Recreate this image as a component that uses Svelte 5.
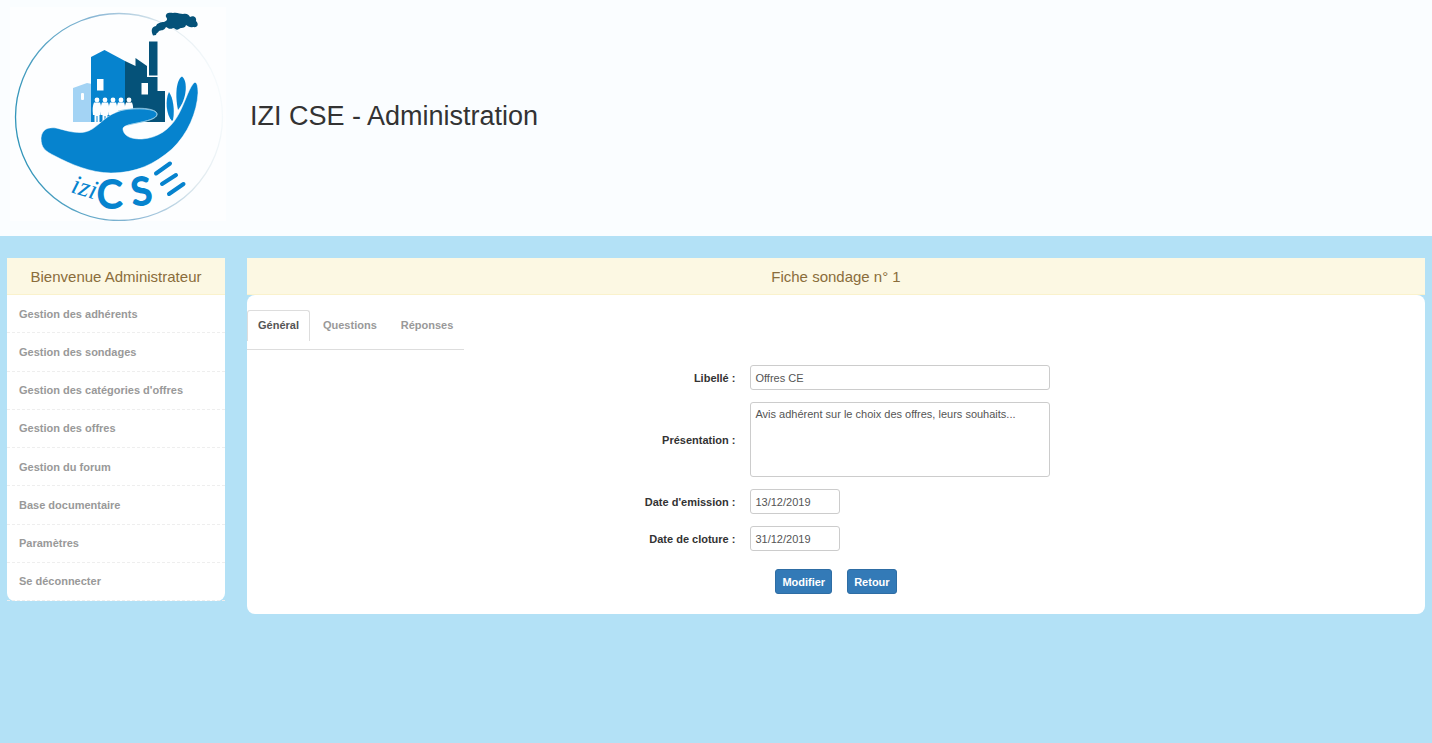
<script lang="ts">
  const menu = [
    "Gestion des adhérents",
    "Gestion des sondages",
    "Gestion des catégories d'offres",
    "Gestion des offres",
    "Gestion du forum",
    "Base documentaire",
    "Paramètres",
    "Se déconnecter",
  ];
  const tabs = ["Général", "Questions", "Réponses"];
  const people = [97, 105, 113, 121, 129];

  let activeTab = $state("Général");
  let label = $state("Offres CE");
  let intro = $state("Avis adhérent sur le choix des offres, leurs souhaits...");
  let startDate = $state("13/12/2019");
  let endDate = $state("31/12/2019");
</script>

<header>
  <svg class="logo" viewBox="10 7 216 214" role="img" aria-label="izi CSE">
    <defs>
      <linearGradient id="ring" x1="0" y1="0.6" x2="1" y2="0.4">
        <stop offset="0" stop-color="#2f94b8" />
        <stop offset="0.5" stop-color="#8fb9d6" />
        <stop offset="0.8" stop-color="#dfe9ee" />
        <stop offset="1" stop-color="#f7fbfd" />
      </linearGradient>
    </defs>
    <rect x="10" y="7" width="216" height="214" fill="#fdfeff" />
    <circle cx="119" cy="117" r="103.5" fill="none" stroke="url(#ring)" stroke-width="1.3" />

    <path fill="#055279" d="M153 35.500C151 31 151 27 156 26C157 23 161 22 164 22C167 21 168 19 166 17C165 13 169 12 173 13C177 12 180 14 183 14C187 13 189 15 190 17C194 15 197 18 196 21C199 24 198 28 193 27C190 28 188 26 186 25C185 29 181 27 179 29C176 31 175 28 173 28C170 30 168 28 166 27C164 31 161 30 159 31C158 33 156 33 156 35Z" />
    <path fill="#a3d3f4" d="M73 88L87 83L92 84V122H73Z" />
    <path fill="#0683ce" d="M91 57L104.500 50L125 61V122H91Z" />
    <path fill="#055279" d="M125 61L135.500 66V58L147 66V77H157.500V91H165V122H125Z" />
    <path fill="#055279" d="M149 41.500H157.500V75.500H149Z" />
    <rect x="97" y="79" width="6.500" height="11.500" fill="#fdfeff" />
    <rect x="141.500" y="83" width="6.500" height="11.500" fill="#fdfeff" />
    <rect x="81" y="93" width="3" height="7" rx="1" fill="#fdfeff" />

    <g fill="#fdfeff">
      {#each people as x}
        <circle cx={x} cy="100" r="2.400" />
        <path d="M{x - 3} 102.500H{x + 3}Q{x + 5} 107 {x + 3.5} 115H{x + 2.5}V122H{x + 0.5}V116H{x - 0.5}V122H{x - 2.5}V115H{x - 4}Q{x - 5} 107 {x - 3} 102.500Z" />
      {/each}
    </g>

    <path fill="#0683ce" stroke="#fdfeff" stroke-width="0.500" d="M41 138C42 129 48 127 56 128C65 130 75 134 85 132C96 130 103 117 117 112C129 107 151 107 156 112C160 117 151 120 142 122C130 125 122 125 123 130C125 138 134 139 142 139C158 138 170 129 177 117C184 106 188 90 193 84C196 80 198 84 198 93C197 112 188 134 172 149C155 164 136 173 111 173C91 173 70 164 55 156C45 151 41 148 41 138Z" />
    <path fill="none" stroke="#8dcbea" stroke-width="0.800" d="M118 111C130 108 151 108 156 112C160 117 151 120 142 122C137 123 132 124 128 125" />
    <path fill="#0683ce" d="M172 121C166 115 165 99 169 92C173 98 175 109 173 120Z" />
    <path fill="#0683ce" d="M178 110C175 96 176 80 182 76.500C188 81 187 99 178 110Z" />

    <g class="wordmark" fill="#0683ce">
      <text class="izi" x="70" y="192" transform="rotate(17 70 192)">izi</text>
      <text class="cse" x="97" y="208">C</text>
      <text class="cse" x="133" y="206" transform="rotate(-8 133 206)">S</text>
    </g>
    <path fill="none" stroke="#0683ce" stroke-width="4" stroke-linecap="round" d="M156 173.500L170 163.500M162 184L176 175M169 194L183.500 184" />
  </svg>
  <h1>IZI CSE - Administration</h1>
</header>

<div class="layout">
  <aside>
    <h2>Bienvenue Administrateur</h2>
    <nav class="menu">
      {#each menu as item}
        <a href="#menu">{item}</a>
      {/each}
    </nav>
  </aside>

  <main>
    <h2>Fiche sondage n° 1</h2>
    <section class="panel">
      <nav class="tabs">
        {#each tabs as tab}
          <a href="#tab" class:active={tab === activeTab} onclick={() => (activeTab = tab)}>{tab}</a>
        {/each}
      </nav>

      <form>
        <div class="fields">
          <label for="label">Libellé :</label>
          <input id="label" type="text" bind:value={label} />
          <label for="intro">Présentation :</label>
          <textarea id="intro" bind:value={intro}></textarea>
          <label for="start">Date d'emission :</label>
          <input id="start" class="date" type="text" bind:value={startDate} />
          <label for="end">Date de cloture :</label>
          <input id="end" class="date" type="text" bind:value={endDate} />
        </div>
        <div class="actions">
          <button type="button">Modifier</button>
          <button type="button">Retour</button>
        </div>
      </form>
    </section>
  </main>
</div>

<style>
  :global(body) {
    background: #b3e1f6;
    color: #333;
    font-family: "Liberation Sans", Arial, sans-serif;
    font-size: 11px;
  }

  header {
    display: flex;
    align-items: center;
    gap: 24px;
    padding: 7px 10px 15px;
    background: #fafdff;
  }

  .logo {
    display: block;
    flex: none;
    width: 216px;
    height: 214px;
  }

  .izi {
    font-family: "Liberation Serif", serif;
    font-style: italic;
    font-size: 27px;
  }

  .cse {
    font-family: Lato, sans-serif;
    font-size: 38px;
    stroke: #0683ce;
    stroke-width: 2px;
    stroke-linejoin: round;
  }

  h1 {
    margin: 0;
    padding-top: 4px;
    font-size: 27px;
    font-weight: normal;
  }

  .layout {
    display: grid;
    grid-template-columns: 218px 1fr;
    gap: 22px;
    align-items: start;
    padding: 22px 7px;
  }

  h2 {
    margin: 0;
    padding: 9px 8px 7px;
    border-bottom: 1px solid #faf2cc;
    background: #fcf8e3;
    color: #8a6d3b;
    font-size: 15px;
    font-weight: normal;
    line-height: 20px;
    text-align: center;
  }

  a {
    color: #999;
    font-weight: bold;
    text-decoration: none;
  }

  .menu {
    display: grid;
    grid-auto-rows: 1fr;
    min-height: 306px;
    border-radius: 0 0 8px 8px;
    background: #fff;
  }

  .menu a {
    display: flex;
    align-items: center;
    padding: 0 12px;
    border-bottom: 1px dashed #eee;
  }

  .panel {
    padding: 15px 0 20px;
    border-radius: 8px;
    background: #fff;
  }

  .tabs {
    display: flex;
    gap: 2px;
    width: 217px;
    height: 39px;
    border-bottom: 1px solid #ddd;
  }

  .tabs a {
    height: 30px;
    padding: 0 10px;
    border: 1px solid transparent;
    border-bottom: 0;
    border-radius: 3px 3px 0 0;
    line-height: 28px;
  }

  .tabs a.active {
    border-color: #ddd;
    color: #555;
  }

  .fields {
    display: grid;
    grid-template-columns: 21fr 29fr;
    gap: 12px 15px;
    align-items: center;
    padding-top: 15px;
  }

  label {
    font-weight: bold;
    text-align: right;
  }

  input,
  textarea {
    box-sizing: border-box;
    width: 300px;
    height: 25px;
    margin: 0;
    padding: 4px;
    border: 1px solid #ccc;
    border-radius: 3px;
    background: #fff;
    color: #555;
    font: inherit;
    line-height: 15px;
  }

  textarea {
    height: 75px;
    resize: none;
  }

  .date {
    width: 90px;
  }

  .actions {
    display: flex;
    justify-content: center;
    gap: 15px;
    margin-top: 18px;
  }

  button {
    height: 25px;
    padding: 0 6px;
    border: 1px solid #2e6da4;
    border-radius: 3px;
    background: #337ab7;
    color: #fff;
    font: inherit;
    font-weight: bold;
  }
</style>
